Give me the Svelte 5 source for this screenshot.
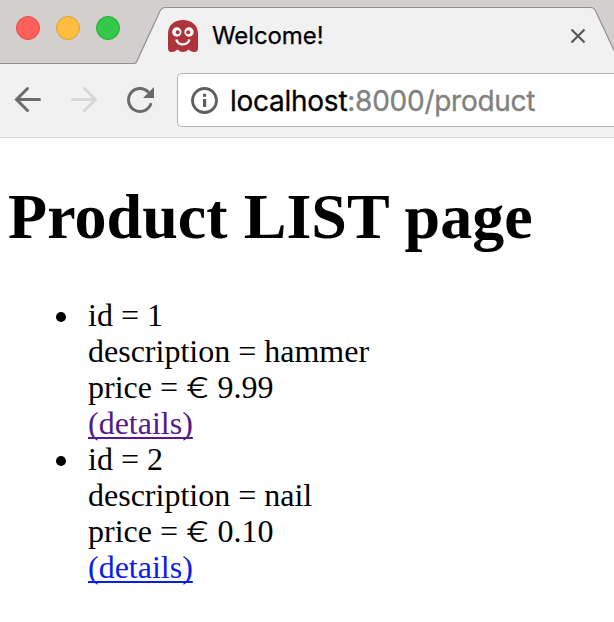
<script>
  const products = [
    { id: 1, description: 'hammer', price: '9.99', visited: true },
    { id: 2, description: 'nail', price: '0.10', visited: false }
  ];
</script>

<div class="window">
  <header class="strip">
    <svg class="frame" width="614" height="64" viewBox="0 0 614 64">
      <path d="M0 64V63.5H134Q136 63.5 137 61L160 11Q162 7.5 165 7.5H591Q594 7.5 596 12L619 61V64Z" fill="#f1f1f1" />
      <path d="M0 63.5H134Q136 63.5 137 61L160 11Q162 7.5 165 7.5H591Q594 7.5 596 12L619 61" fill="none" stroke="#929090" stroke-width="1.2" />
    </svg>
    <div class="lights">
      <i class="red"></i><i class="yellow"></i><i class="green"></i>
    </div>
    <div class="tab">
      <svg class="ghost" width="32" height="34" viewBox="0 0 32 34">
        <path d="M1 15C1 6 7.5 1 16 1S31 6 31 15V29Q31 33 27.5 33Q24 33 21.5 30.5Q19 33 16 33T10.5 30.5Q8 33 4.5 33Q1 33 1 29Z" fill="#af3439" />
        <circle cx="9.8" cy="13" r="4.7" fill="#fff" />
        <circle cx="22" cy="13" r="4.7" fill="#fff" />
        <circle cx="10.7" cy="13.2" r="2" fill="#af3439" />
        <circle cx="21.2" cy="13.2" r="2" fill="#af3439" />
        <path d="M9.3 20.5C11 27 20.5 27 22.5 20.5" fill="none" stroke="#fff" stroke-width="2.4" />
      </svg>
      <span class="title">Welcome!</span>
      <svg class="close" width="16" height="16" viewBox="0 0 16 16">
        <path d="M1.5 1.5L14.5 14.5M14.5 1.5L1.5 14.5" stroke="#5a5a5a" stroke-width="2.3" />
      </svg>
    </div>
  </header>

  <nav class="toolbar">
    <svg class="icons" width="177" height="73" viewBox="0 64 177 73" fill="none" stroke-width="3" stroke-linecap="round">
      <path d="M39.5 99.5H17M27.5 88.5L16.5 99.5L27.5 110.5" stroke="#6b6b6b" />
      <path d="M72.5 99.5H95M84.5 88.5L95.5 99.5L84.5 110.5" stroke="#d7d7d7" />
      <path d="M150.7 104.3A11.5 11.5 0 1 1 148 91.7" stroke="#6b6b6b" />
      <path d="M154 87V98H143Z" fill="#6b6b6b" />
    </svg>
    <div class="address">
      <svg class="info" width="28" height="28" viewBox="0 0 28 28">
        <circle cx="14.5" cy="14.5" r="12" fill="none" stroke="#5f5f5f" stroke-width="2.8" />
        <path d="M13 7.7H16.2V10.8H13ZM13 12.9H16.2V21.1H13Z" fill="#5f5f5f" />
      </svg>
      <span class="url">localhost<span class="path">:8000/product</span></span>
    </div>
  </nav>

  <main>
    <h1>Product LIST page</h1>
    <ul>
      {#each products as p}
        <li>
          id = {p.id}<br />
          description = {p.description}<br />
          price = <span class="euro">€</span> {p.price}<br />
          <a href="#{p.id}" class:visited={p.visited}>(details)</a>
        </li>
      {/each}
    </ul>
  </main>
</div>

<style>
  .window {
    width: 614px;
    height: 622px;
    overflow: hidden;
    background: #fff;
    font-family: 'Liberation Serif', serif;
    color: #000;
  }
  .strip {
    position: relative;
    display: flex;
    height: 64px;
    background: #d2cfce;
  }
  .frame {
    position: absolute;
    inset: 0;
  }
  .lights {
    display: flex;
    gap: 16px;
    width: 152px;
    box-sizing: border-box;
    padding: 16px 0 0 16px;
  }
  .lights i {
    box-sizing: border-box;
    width: 24px;
    height: 24px;
    border-radius: 50%;
    position: relative;
  }
  .red { background: #ff605c; border: 1px solid #e24b48; }
  .yellow { background: #ffbd40; border: 1px solid #de9f35; }
  .green { background: #34c84a; border: 1px solid #27ab35; }
  .tab {
    position: relative;
    flex: 1;
    display: flex;
    align-items: flex-start;
    padding: 19px 28px 0 15px;
  }
  .title {
    flex: 1;
    margin-left: 13px;
    font: 24px/34px Inter, sans-serif;
    letter-spacing: -0.1px;
    -webkit-text-stroke: 0.25px currentColor;
  }
  .close {
    margin-top: 9px;
  }
  .toolbar {
    display: flex;
    height: 74px;
    box-sizing: border-box;
    background: #f1f1f1;
    border-bottom: 1px solid #d2d2d2;
  }
  .address {
    flex: 1;
    display: flex;
    align-items: center;
    height: 54px;
    box-sizing: border-box;
    margin-top: 9px;
    padding-left: 12px;
    background: #fff;
    border: 1px solid #b5b5b5;
    border-right: 0;
    border-radius: 5px 0 0 5px;
  }
  .url {
    margin-left: 12px;
    padding-top: 2px;
    font: 28px/36px Inter, sans-serif;
    letter-spacing: -0.26px;
    white-space: nowrap;
    -webkit-text-stroke: 0.3px currentColor;
  }
  .path { color: #808080; }
  main { padding: 0 8px; }
  h1 {
    margin: 42px 0 43px;
    font-size: 64px;
    line-height: 74px;
    letter-spacing: 0.05px;
    white-space: nowrap;
  }
  ul {
    margin: 0;
    padding-left: 80px;
    font-size: 32px;
    line-height: 36px;
    list-style: none;
  }
  li::before {
    content: '';
    float: left;
    width: 10px;
    height: 10px;
    margin: 15px 0 0 -32px;
    border-radius: 50%;
    background: #000;
  }
  .euro {
    display: inline-block;
    width: 23.5px;
    font-family: Inter, sans-serif;
    font-size: 29px;
    font-weight: 300;
    line-height: 1;
    transform: scaleX(1.22);
    transform-origin: left;
  }
  a { color: #0b1ee8; text-decoration-thickness: 2px; text-underline-offset: 3px; text-decoration-skip-ink: none; }
  a.visited { color: #551a8b; }
</style>
